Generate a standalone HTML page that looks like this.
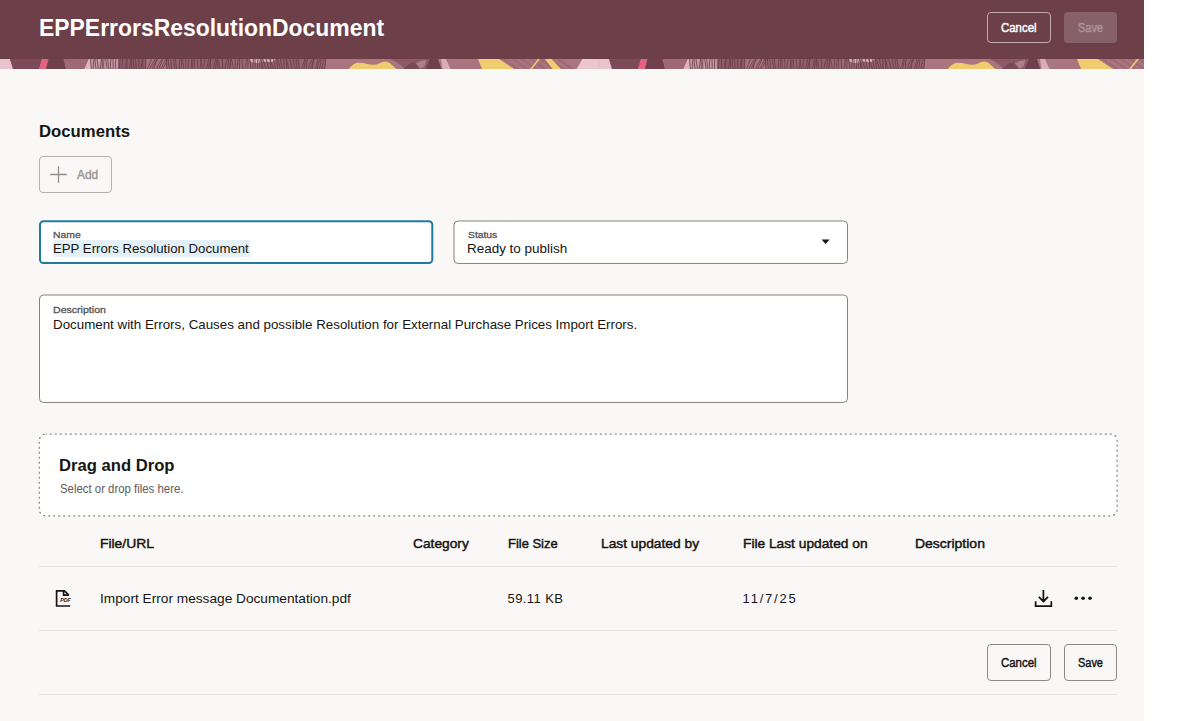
<!DOCTYPE html>
<html lang="en">
<head>
<meta charset="utf-8">
<title>EPPErrorsResolutionDocument</title>
<style>
html,body{margin:0;padding:0;background:#fff;}
body{width:1195px;height:721px;overflow:hidden;position:relative;font-family:"Liberation Sans",Arial,sans-serif;color:#161513;}
#page{position:absolute;left:0;top:0;width:1144px;height:721px;background:#FAF8F6;overflow:hidden;}
#hdr{position:absolute;left:0;top:0;width:1144px;height:59px;background:#6C3F49;}
#strip{position:absolute;left:0;top:59px;width:1144px;height:10px;display:block;}
.t{position:absolute;margin:0;padding:0;font-weight:normal;white-space:pre;line-height:20px;transform-origin:0 50%;}
.btn{position:absolute;box-sizing:border-box;margin:0;padding:0;background:none;font:inherit;border:1px solid #8b8a88;border-radius:4px;}
.box{position:absolute;box-sizing:border-box;background:#fff;border:1px solid #9a9997;border-radius:4px;}
.hr{position:absolute;left:39px;width:1078px;height:1px;background:#e6e3e0;}
svg{position:absolute;overflow:visible;}
</style>
</head>
<body>
<div id="page">
<div id="hdr"></div>

<svg id="strip" width="1144" height="10" viewBox="0 0 1144 10">
<g>
<rect x="0" y="0" width="598.5" height="10" fill="#A9757F"/>
<polygon points="0,0 10,0 13,10 0,10" fill="#E9C4CC"/>
<polygon points="10,0 42,0 39,10 13,10" fill="#7C4B57"/>
<polygon points="42,0 48,0 45.5,10 39,10" fill="#E8607F"/>
<polygon points="48.5,0 63.5,0 66,10 46,10" fill="#70404B"/>
<polygon points="64,0 89,0 84.5,10 66.5,10" fill="#9E6975"/>
<polygon points="89,0 91,0 91,10 84.5,10" fill="#DDB3BD"/>
<rect x="90" y="0" width="28.3" height="10" fill="#C39AA4"/>
<rect x="118" y="0" width="28.3" height="10" fill="#8C5C68"/>
<rect x="146" y="0" width="20.3" height="10" fill="#A6737F"/>
<rect x="166" y="0" width="39.3" height="10" fill="#96646F"/>
<rect x="205" y="0" width="27.3" height="10" fill="#8E5E69"/>
<rect x="232" y="0" width="30.3" height="10" fill="#9A6873"/>
<rect x="262" y="0" width="38.3" height="10" fill="#8F5F6A"/>
<rect x="300" y="0" width="25.8" height="10" fill="#96646F"/>
<polygon points="89,0 91,0 91,10 84.5,10" fill="#DDB3BD"/>
<path d="M250,0H276L272,3.2 262,2.6 258,4.2 251,3Z" fill="#DCC0C7" opacity="0.85"/>
<path d="M90.7,0C90.2,3.3 91.3,6.6 91.2,10M94.1,0C93.0,3.3 93.6,6.6 93.1,10M95.2,0C94.8,3.3 95.7,6.6 96.1,10M97.0,0C97.3,3.3 98.4,6.6 98.2,10M101.4,0C101.2,3.3 100.7,6.6 100.1,10M102.2,0C102.0,3.3 102.9,6.6 102.0,10M104.1,0C103.4,3.3 103.8,6.6 103.9,10M105.8,0C105.8,3.3 107.1,6.6 106.9,10M107.8,0C108.3,3.3 108.0,6.6 109.0,10M111.0,0C110.2,3.3 110.2,6.6 110.9,10M113.0,0C113.0,3.3 113.5,6.6 113.0,10M115.9,0C115.7,3.3 115.3,6.6 115.6,10M120.3,0C119.5,3.3 119.7,6.6 119.2,10M122.7,0C122.2,3.3 122.3,6.6 122.2,10M127.1,0C125.8,3.3 125.7,6.6 125.2,10M127.0,0C127.1,3.3 126.5,6.6 127.5,10M130.7,0C130.4,3.3 130.5,6.6 129.4,10M131.7,0C131.4,3.3 131.7,6.6 131.7,10M133.5,0C133.0,3.3 133.6,6.6 134.3,10M135.4,0C136.0,3.3 136.2,6.6 136.2,10M138.7,0C138.5,3.3 139.1,6.6 138.8,10M142.5,0C141.6,3.3 141.5,6.6 140.7,10M142.5,0C143.2,3.3 142.4,6.6 143.3,10M145.6,0C146.3,3.3 145.5,6.6 145.4,10M151.5,0C150.2,3.3 149.3,6.6 147.2,10M155.4,0C153.1,3.3 151.5,6.6 149.8,10M157.1,0C155.2,3.3 153.3,6.6 152.1,10M157.5,0C155.8,3.3 154.7,6.6 154.0,10M162.1,0C159.7,3.3 158.0,6.6 156.6,10M163.0,0C161.3,3.3 160.2,6.6 158.7,10M165.9,0C164.2,3.3 162.7,6.6 160.8,10M167.1,0C166.3,3.3 165.0,6.6 162.7,10M166.7,0C166.7,3.3 166.3,6.6 167.2,10M168.5,0C168.1,3.3 168.8,6.6 169.8,10M170.7,0C171.3,3.3 170.8,6.6 171.9,10M173.8,0C173.4,3.3 174.3,6.6 174.9,10M175.5,0C175.4,3.3 176.1,6.6 176.8,10M180.0,0C179.9,3.3 179.3,6.6 179.1,10M181.6,0C182.3,3.3 181.1,6.6 181.0,10M182.9,0C182.5,3.3 183.8,6.6 183.6,10M185.6,0C186.0,3.3 185.8,6.6 185.9,10M188.9,0C188.6,3.3 187.7,6.6 188.0,10M191.8,0C192.0,3.3 190.9,6.6 191.0,10M193.1,0C192.6,3.3 192.7,6.6 192.9,10M194.4,0C194.1,3.3 194.9,6.6 195.0,10M197.3,0C197.1,3.3 198.3,6.6 198.0,10M200.6,0C201.0,3.3 200.7,6.6 200.1,10M201.2,0C201.5,3.3 202.3,6.6 202.2,10M204.6,0C204.4,3.3 203.7,6.6 204.1,10M208.9,0C207.9,3.3 207.9,6.6 206.2,10M211.2,0C210.1,3.3 208.9,6.6 208.5,10M210.4,0C210.2,3.3 210.5,6.6 210.6,10M215.6,0C214.9,3.3 214.5,6.6 213.6,10M217.5,0C216.1,3.3 216.0,6.6 215.5,10M217.5,0C216.9,3.3 218.1,6.6 217.6,10M217.4,0C219.1,3.3 219.5,6.6 219.9,10M221.9,0C222.9,3.3 222.7,6.6 222.5,10M227.6,0C225.7,3.3 225.7,6.6 224.6,10M229.0,0C227.8,3.3 228.4,6.6 227.2,10M230.7,0C230.2,3.3 230.2,6.6 229.8,10M231.3,0C232.5,3.3 233.0,6.6 233.2,10M235.2,0C236.0,3.3 235.0,6.6 235.1,10M238.5,0C237.5,3.3 237.2,6.6 237.2,10M239.5,0C240.0,3.3 239.2,6.6 239.5,10M242.2,0C241.6,3.3 243.1,6.6 242.5,10M246.4,0C246.1,3.3 245.9,6.6 244.8,10M247.5,0C248.3,3.3 247.7,6.6 247.8,10M249.4,0C249.9,3.3 251.0,6.6 250.8,10M253.3,0C253.7,3.3 252.4,6.6 252.9,10M254.9,0C255.3,3.3 255.1,6.6 255.0,10M258.0,0C257.8,3.3 257.5,6.6 257.3,10M260.7,0C259.4,3.3 259.2,6.6 259.2,10M262.2,0C261.8,3.3 261.6,6.6 261.1,10M260.5,0C261.6,3.3 262.3,6.6 263.2,10M262.8,0C263.6,3.3 265.1,6.6 266.2,10M266.3,0C266.7,3.3 268.0,6.6 268.8,10M269.9,0C271.0,3.3 270.2,6.6 271.1,10M270.1,0C270.7,3.3 272.4,6.6 273.7,10M273.6,0C274.2,3.3 274.4,6.6 275.6,10M276.3,0C277.5,3.3 276.7,6.6 277.9,10M276.6,0C278.5,3.3 279.9,6.6 280.2,10M280.5,0C280.4,3.3 282.4,6.6 282.3,10M283.4,0C284.3,3.3 283.5,6.6 284.4,10M286.0,0C286.2,3.3 286.5,6.6 287.0,10M286.3,0C287.7,3.3 287.4,6.6 289.3,10M289.7,0C290.9,3.3 291.2,6.6 292.3,10M293.2,0C293.9,3.3 293.8,6.6 295.3,10M296.3,0C296.0,3.3 296.6,6.6 297.4,10M298.0,0C297.9,3.3 299.3,6.6 299.3,10M304.7,0C303.9,3.3 303.2,6.6 301.2,10M305.2,0C305.5,3.3 304.4,6.6 303.8,10M307.4,0C306.1,3.3 306.9,6.6 306.1,10M312.4,0C310.7,3.3 309.0,6.6 308.7,10M314.0,0C312.1,3.3 312.4,6.6 310.6,10M314.3,0C313.0,3.3 312.2,6.6 312.5,10M317.8,0C317.7,3.3 316.5,6.6 315.5,10M320.0,0C318.6,3.3 317.5,6.6 317.4,10M321.3,0C320.1,3.3 320.9,6.6 319.5,10M324.4,0C323.0,3.3 322.6,6.6 321.8,10M325.7,0C325.6,3.3 325.4,6.6 323.9,10" fill="none" stroke="#6C3F49" stroke-width="0.95" opacity="0.9"/>
<path d="M390,0H431L427,10H421L413,3.5 405,10C401,6.5 397,2.5 390,0Z" fill="#8C5A66"/>
<path d="M348.8,10C351,7.5 354,4.2 358,3.8C364,3.4 369,6 374,5.7C379,5.4 381,2.6 385.5,2.4C389,2.4 392,6 396.5,10Z" fill="#F0CC71"/>
<polygon points="403,10 411,3.5 414.5,3.5 420,10" fill="#7A4A55"/>
<polygon points="421,2 426.5,1 424.5,7.5 420.5,9.5 416,4.5" fill="#B98C96" opacity="0.75"/>
<polygon points="429.8,0 438,0 441.3,10 425.8,10" fill="#6F404B"/>
<polygon points="441,0 446,0 450.5,10 442.5,10" fill="#D9AEB8"/>
<polygon points="478,0 499,0 514,10 482,10" fill="#F0CC71"/>
<polygon points="502,0 506,0 520,10 516,10" fill="#96636F" opacity="0.55"/>
<polygon points="511,0 515,0 529,10 525,10" fill="#96636F" opacity="0.55"/>
<polygon points="520,0 524,0 538,10 534,10" fill="#96636F" opacity="0.55"/>
<polygon points="529,0 533,0 547,10 543,10" fill="#96636F" opacity="0.55"/>
<polygon points="538,0 542,0 556,10 552,10" fill="#96636F" opacity="0.55"/>
<polygon points="547,0 551,0 565,10 561,10" fill="#96636F" opacity="0.55"/>
<polygon points="556,0 560,0 574,10 570,10" fill="#96636F" opacity="0.55"/>
<polygon points="538,0 540,0 532,10 530,10" fill="#F0CC71"/>
<polygon points="545,0 551.5,0 561,10 552.5,10" fill="#F0CC71"/>
<polygon points="582.5,0 598.5,0 598.5,10 576.5,10" fill="#EBC6CF"/>
</g>
<g transform="translate(599,0)">
<rect x="0" y="0" width="598.5" height="10" fill="#A9757F"/>
<polygon points="0,0 10,0 13,10 0,10" fill="#E9C4CC"/>
<polygon points="10,0 42,0 39,10 13,10" fill="#7C4B57"/>
<polygon points="42,0 48,0 45.5,10 39,10" fill="#E8607F"/>
<polygon points="48.5,0 63.5,0 66,10 46,10" fill="#70404B"/>
<polygon points="64,0 89,0 84.5,10 66.5,10" fill="#9E6975"/>
<polygon points="89,0 91,0 91,10 84.5,10" fill="#DDB3BD"/>
<rect x="90" y="0" width="28.3" height="10" fill="#C39AA4"/>
<rect x="118" y="0" width="28.3" height="10" fill="#8C5C68"/>
<rect x="146" y="0" width="20.3" height="10" fill="#A6737F"/>
<rect x="166" y="0" width="39.3" height="10" fill="#96646F"/>
<rect x="205" y="0" width="27.3" height="10" fill="#8E5E69"/>
<rect x="232" y="0" width="30.3" height="10" fill="#9A6873"/>
<rect x="262" y="0" width="38.3" height="10" fill="#8F5F6A"/>
<rect x="300" y="0" width="25.8" height="10" fill="#96646F"/>
<polygon points="89,0 91,0 91,10 84.5,10" fill="#DDB3BD"/>
<path d="M250,0H276L272,3.2 262,2.6 258,4.2 251,3Z" fill="#DCC0C7" opacity="0.85"/>
<path d="M90.7,0C90.2,3.3 91.3,6.6 91.2,10M94.1,0C93.0,3.3 93.6,6.6 93.1,10M95.2,0C94.8,3.3 95.7,6.6 96.1,10M97.0,0C97.3,3.3 98.4,6.6 98.2,10M101.4,0C101.2,3.3 100.7,6.6 100.1,10M102.2,0C102.0,3.3 102.9,6.6 102.0,10M104.1,0C103.4,3.3 103.8,6.6 103.9,10M105.8,0C105.8,3.3 107.1,6.6 106.9,10M107.8,0C108.3,3.3 108.0,6.6 109.0,10M111.0,0C110.2,3.3 110.2,6.6 110.9,10M113.0,0C113.0,3.3 113.5,6.6 113.0,10M115.9,0C115.7,3.3 115.3,6.6 115.6,10M120.3,0C119.5,3.3 119.7,6.6 119.2,10M122.7,0C122.2,3.3 122.3,6.6 122.2,10M127.1,0C125.8,3.3 125.7,6.6 125.2,10M127.0,0C127.1,3.3 126.5,6.6 127.5,10M130.7,0C130.4,3.3 130.5,6.6 129.4,10M131.7,0C131.4,3.3 131.7,6.6 131.7,10M133.5,0C133.0,3.3 133.6,6.6 134.3,10M135.4,0C136.0,3.3 136.2,6.6 136.2,10M138.7,0C138.5,3.3 139.1,6.6 138.8,10M142.5,0C141.6,3.3 141.5,6.6 140.7,10M142.5,0C143.2,3.3 142.4,6.6 143.3,10M145.6,0C146.3,3.3 145.5,6.6 145.4,10M151.5,0C150.2,3.3 149.3,6.6 147.2,10M155.4,0C153.1,3.3 151.5,6.6 149.8,10M157.1,0C155.2,3.3 153.3,6.6 152.1,10M157.5,0C155.8,3.3 154.7,6.6 154.0,10M162.1,0C159.7,3.3 158.0,6.6 156.6,10M163.0,0C161.3,3.3 160.2,6.6 158.7,10M165.9,0C164.2,3.3 162.7,6.6 160.8,10M167.1,0C166.3,3.3 165.0,6.6 162.7,10M166.7,0C166.7,3.3 166.3,6.6 167.2,10M168.5,0C168.1,3.3 168.8,6.6 169.8,10M170.7,0C171.3,3.3 170.8,6.6 171.9,10M173.8,0C173.4,3.3 174.3,6.6 174.9,10M175.5,0C175.4,3.3 176.1,6.6 176.8,10M180.0,0C179.9,3.3 179.3,6.6 179.1,10M181.6,0C182.3,3.3 181.1,6.6 181.0,10M182.9,0C182.5,3.3 183.8,6.6 183.6,10M185.6,0C186.0,3.3 185.8,6.6 185.9,10M188.9,0C188.6,3.3 187.7,6.6 188.0,10M191.8,0C192.0,3.3 190.9,6.6 191.0,10M193.1,0C192.6,3.3 192.7,6.6 192.9,10M194.4,0C194.1,3.3 194.9,6.6 195.0,10M197.3,0C197.1,3.3 198.3,6.6 198.0,10M200.6,0C201.0,3.3 200.7,6.6 200.1,10M201.2,0C201.5,3.3 202.3,6.6 202.2,10M204.6,0C204.4,3.3 203.7,6.6 204.1,10M208.9,0C207.9,3.3 207.9,6.6 206.2,10M211.2,0C210.1,3.3 208.9,6.6 208.5,10M210.4,0C210.2,3.3 210.5,6.6 210.6,10M215.6,0C214.9,3.3 214.5,6.6 213.6,10M217.5,0C216.1,3.3 216.0,6.6 215.5,10M217.5,0C216.9,3.3 218.1,6.6 217.6,10M217.4,0C219.1,3.3 219.5,6.6 219.9,10M221.9,0C222.9,3.3 222.7,6.6 222.5,10M227.6,0C225.7,3.3 225.7,6.6 224.6,10M229.0,0C227.8,3.3 228.4,6.6 227.2,10M230.7,0C230.2,3.3 230.2,6.6 229.8,10M231.3,0C232.5,3.3 233.0,6.6 233.2,10M235.2,0C236.0,3.3 235.0,6.6 235.1,10M238.5,0C237.5,3.3 237.2,6.6 237.2,10M239.5,0C240.0,3.3 239.2,6.6 239.5,10M242.2,0C241.6,3.3 243.1,6.6 242.5,10M246.4,0C246.1,3.3 245.9,6.6 244.8,10M247.5,0C248.3,3.3 247.7,6.6 247.8,10M249.4,0C249.9,3.3 251.0,6.6 250.8,10M253.3,0C253.7,3.3 252.4,6.6 252.9,10M254.9,0C255.3,3.3 255.1,6.6 255.0,10M258.0,0C257.8,3.3 257.5,6.6 257.3,10M260.7,0C259.4,3.3 259.2,6.6 259.2,10M262.2,0C261.8,3.3 261.6,6.6 261.1,10M260.5,0C261.6,3.3 262.3,6.6 263.2,10M262.8,0C263.6,3.3 265.1,6.6 266.2,10M266.3,0C266.7,3.3 268.0,6.6 268.8,10M269.9,0C271.0,3.3 270.2,6.6 271.1,10M270.1,0C270.7,3.3 272.4,6.6 273.7,10M273.6,0C274.2,3.3 274.4,6.6 275.6,10M276.3,0C277.5,3.3 276.7,6.6 277.9,10M276.6,0C278.5,3.3 279.9,6.6 280.2,10M280.5,0C280.4,3.3 282.4,6.6 282.3,10M283.4,0C284.3,3.3 283.5,6.6 284.4,10M286.0,0C286.2,3.3 286.5,6.6 287.0,10M286.3,0C287.7,3.3 287.4,6.6 289.3,10M289.7,0C290.9,3.3 291.2,6.6 292.3,10M293.2,0C293.9,3.3 293.8,6.6 295.3,10M296.3,0C296.0,3.3 296.6,6.6 297.4,10M298.0,0C297.9,3.3 299.3,6.6 299.3,10M304.7,0C303.9,3.3 303.2,6.6 301.2,10M305.2,0C305.5,3.3 304.4,6.6 303.8,10M307.4,0C306.1,3.3 306.9,6.6 306.1,10M312.4,0C310.7,3.3 309.0,6.6 308.7,10M314.0,0C312.1,3.3 312.4,6.6 310.6,10M314.3,0C313.0,3.3 312.2,6.6 312.5,10M317.8,0C317.7,3.3 316.5,6.6 315.5,10M320.0,0C318.6,3.3 317.5,6.6 317.4,10M321.3,0C320.1,3.3 320.9,6.6 319.5,10M324.4,0C323.0,3.3 322.6,6.6 321.8,10M325.7,0C325.6,3.3 325.4,6.6 323.9,10" fill="none" stroke="#6C3F49" stroke-width="0.95" opacity="0.9"/>
<path d="M390,0H431L427,10H421L413,3.5 405,10C401,6.5 397,2.5 390,0Z" fill="#8C5A66"/>
<path d="M348.8,10C351,7.5 354,4.2 358,3.8C364,3.4 369,6 374,5.7C379,5.4 381,2.6 385.5,2.4C389,2.4 392,6 396.5,10Z" fill="#F0CC71"/>
<polygon points="403,10 411,3.5 414.5,3.5 420,10" fill="#7A4A55"/>
<polygon points="421,2 426.5,1 424.5,7.5 420.5,9.5 416,4.5" fill="#B98C96" opacity="0.75"/>
<polygon points="429.8,0 438,0 441.3,10 425.8,10" fill="#6F404B"/>
<polygon points="441,0 446,0 450.5,10 442.5,10" fill="#D9AEB8"/>
<polygon points="478,0 499,0 514,10 482,10" fill="#F0CC71"/>
<polygon points="502,0 506,0 520,10 516,10" fill="#96636F" opacity="0.55"/>
<polygon points="511,0 515,0 529,10 525,10" fill="#96636F" opacity="0.55"/>
<polygon points="520,0 524,0 538,10 534,10" fill="#96636F" opacity="0.55"/>
<polygon points="529,0 533,0 547,10 543,10" fill="#96636F" opacity="0.55"/>
<polygon points="538,0 542,0 556,10 552,10" fill="#96636F" opacity="0.55"/>
<polygon points="547,0 551,0 565,10 561,10" fill="#96636F" opacity="0.55"/>
<polygon points="556,0 560,0 574,10 570,10" fill="#96636F" opacity="0.55"/>
<polygon points="538,0 540,0 532,10 530,10" fill="#F0CC71"/>
<polygon points="545,0 551.5,0 561,10 552.5,10" fill="#F0CC71"/>
<polygon points="582.5,0 598.5,0 598.5,10 576.5,10" fill="#EBC6CF"/>
</g>
</svg>

<h1 class="t" style="left:39px;top:18px;font-size:24px;font-weight:bold;color:#fff;transform:scaleX(0.955);">EPPErrorsResolutionDocument</h1>
<button type="button" class="btn" style="left:987px;top:12px;width:64px;height:31px;border-color:#bfacb0;"></button>
<div class="t" style="left:1001px;top:18px;font-size:12.5px;color:#fff;transform:scaleX(0.915);-webkit-text-stroke:0.45px;">Cancel</div>
<button type="button" class="btn" style="left:1064px;top:12px;width:53px;height:31px;border:none;background:#87616A;"></button>
<div class="t" style="left:1078px;top:18px;font-size:12.5px;color:#AE959B;transform:scaleX(0.875);-webkit-text-stroke:0.45px;">Save</div>
<h2 class="t" style="left:38.9px;top:122px;font-size:17px;font-weight:bold;transform:scaleX(0.983);">Documents</h2>
<button type="button" class="btn" style="left:39px;top:156px;width:73px;height:37px;border-color:#b3b2b0;"></button>
<svg style="left:49.5px;top:166.3px" width="17" height="17" viewBox="0 0 17 17"><path d="M8.5 0.2V16.8M0.2 8.5H16.8" stroke="#8f8e8c" stroke-width="1.3" fill="none"/></svg>
<div class="t" style="left:76.7px;top:165px;font-size:12px;color:#9a9997;transform:scaleX(0.995);-webkit-text-stroke:0.45px;">Add</div>
<svg style="left:0;top:0" width="1144" height="721" viewBox="0 0 1144 721"><rect x="40.0" y="221.3" width="392.30" height="41.65" rx="3.5" ry="3.5" fill="#fff" stroke="#1F7B9C" stroke-width="2"/><rect x="454.0" y="221.0" width="393.50" height="42.45" rx="4" ry="4" fill="#fff" stroke="#838280" stroke-width="1"/><rect x="39.5" y="295.0" width="808.00" height="107.45" rx="4" ry="4" fill="#fff" stroke="#838280" stroke-width="1"/></svg>
<div style="position:absolute;left:53px;top:240px;width:197px;height:16.5px;background:#E3F0F7;"></div>
<label class="t" style="left:53.3px;top:225px;font-size:9.7px;color:#555452;transform:scaleX(1.07);-webkit-text-stroke:0.3px #555452;">Name</label>
<div class="t" style="left:53.2px;top:239px;font-size:13px;transform:scaleX(1.016);">EPP Errors Resolution Document</div>
<label class="t" style="left:467.6px;top:225px;font-size:9.7px;color:#555452;transform:scaleX(1.065);-webkit-text-stroke:0.3px #555452;">Status</label>
<div class="t" style="left:467.3px;top:239px;font-size:13px;transform:scaleX(1.034);">Ready to publish</div>
<svg style="left:821px;top:239px" width="10" height="6" viewBox="0 0 10 6"><path d="M0.6 0.4H8.6L4.6 5.1Z" fill="#161513"/></svg>
<label class="t" style="left:53.3px;top:300px;font-size:9.7px;color:#555452;transform:scaleX(1.092);-webkit-text-stroke:0.3px #555452;">Description</label>
<div class="t" style="left:53.2px;top:315px;font-size:13px;transform:scaleX(1.026);">Document with Errors, Causes and possible Resolution for External Purchase Prices Import Errors.</div>
<svg style="left:38px;top:433px" width="1081" height="84" viewBox="0 0 1081 84"><rect x="1.3" y="1.0" width="1077.8" height="81.9" rx="6.5" ry="6.5" fill="#fff" stroke="#8c8b89" stroke-width="1.25" stroke-dasharray="2 3" stroke-dashoffset="1"/></svg>
<h3 class="t" style="left:59.3px;top:455px;font-size:16.5px;font-weight:bold;transform:scaleX(1.008);">Drag and Drop</h3>
<div class="t" style="left:60.1px;top:479px;font-size:12px;color:#5d5c5a;transform:scaleX(0.949);">Select or drop files here.</div>
<div class="t" style="left:100.3px;top:534px;font-size:13px;transform:scaleX(1.066);-webkit-text-stroke:0.45px;">File/URL</div>
<div class="t" style="left:413.2px;top:534px;font-size:13px;transform:scaleX(1.057);-webkit-text-stroke:0.45px;">Category</div>
<div class="t" style="left:507.5px;top:534px;font-size:13px;transform:scaleX(0.995);-webkit-text-stroke:0.45px;">File Size</div>
<div class="t" style="left:600.7px;top:534px;font-size:13px;transform:scaleX(1.06);-webkit-text-stroke:0.45px;">Last updated by</div>
<div class="t" style="left:742.6px;top:534px;font-size:13px;transform:scaleX(1.057);-webkit-text-stroke:0.45px;">File Last updated on</div>
<div class="t" style="left:914.5px;top:534px;font-size:13px;transform:scaleX(1.075);-webkit-text-stroke:0.45px;">Description</div>
<div class="hr" style="top:566px"></div>
<div class="t" style="left:99.6px;top:589px;font-size:13px;transform:scaleX(1.052);">Import Error message Documentation.pdf</div>
<div class="t" style="left:507.5px;top:589px;font-size:13px;letter-spacing:0.42px;">59.11 KB</div>
<div class="t" style="left:742.6px;top:589px;font-size:13px;letter-spacing:1.78px;">11/7/25</div>
<svg style="left:54px;top:588px" width="20" height="22" viewBox="0 0 20 22">
<path d="M15.2 17.2V18H2.6V2.9H10.4L14.8 7.2" fill="none" stroke="#161513" stroke-width="1.7"/>
<path d="M9.6 2.9V7.2H14.8" fill="none" stroke="#161513" stroke-width="1.7"/>
<text x="6.2" y="14.0" font-family="Liberation Sans, Arial, sans-serif" font-size="5.4" font-weight="bold" font-style="italic" fill="#161513" textLength="10.6" lengthAdjust="spacingAndGlyphs">PDF</text>
</svg>
<svg style="left:1033px;top:588px" width="22" height="22" viewBox="0 0 22 22">
<path d="M2.6 13.2V18H18.3V13.2" fill="none" stroke="#161513" stroke-width="1.75"/>
<path d="M10.4 2V13.2M5.8 8.8L10.4 13.4L15 8.8" fill="none" stroke="#161513" stroke-width="1.75"/>
</svg>
<svg style="left:1072px;top:594px" width="22" height="9" viewBox="0 0 22 9">
<circle cx="4.3" cy="4.3" r="1.8" fill="#161513"/><circle cx="11.1" cy="4.3" r="1.8" fill="#161513"/><circle cx="18" cy="4.3" r="1.8" fill="#161513"/>
</svg>
<div class="hr" style="top:630px"></div>
<button type="button" class="btn" style="left:987px;top:644px;width:64px;height:37px;"></button>
<div class="t" style="left:1001px;top:653px;font-size:12.5px;transform:scaleX(0.915);-webkit-text-stroke:0.45px;">Cancel</div>
<button type="button" class="btn" style="left:1064px;top:644px;width:53px;height:37px;"></button>
<div class="t" style="left:1078px;top:653px;font-size:12.5px;transform:scaleX(0.875);-webkit-text-stroke:0.45px;">Save</div>
<div class="hr" style="top:694px"></div>
</div>
</body>
</html>
